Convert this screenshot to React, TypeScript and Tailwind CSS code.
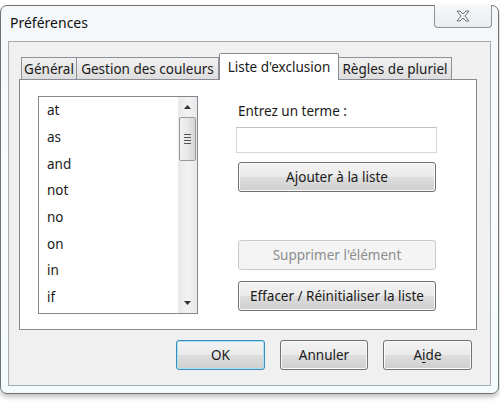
import React from "react";

const font = { fontFamily: '"Noto Sans", "Open Sans", Arial, sans-serif' };

function Tab({ label, selected, w }: { label: string; selected?: boolean; w: string }) {
  if (selected) {
    return (
      <div
        className={`${w} h-[27px] -mb-px relative z-10 flex items-center justify-center border border-[#898c95] border-b-0 bg-white text-[13.5px] text-[#1a1a1a] rounded-t-[2px]`}
      >
        {label}
      </div>
    );
  }
  return (
    <div
      className={`${w} h-[23px] -mb-px flex items-center justify-center border border-[#8e9196] border-b-0 bg-gradient-to-b from-[#f2f2f2] to-[#dcdcdc] text-[13.5px] text-[#1a1a1a] -ml-px first:ml-0`}
    >
      {label}
    </div>
  );
}

function Btn({
  children,
  w,
  disabled,
  focus,
}: {
  children: React.ReactNode;
  w: string;
  disabled?: boolean;
  focus?: boolean;
}) {
  if (disabled) {
    return (
      <div
        className={`${w} h-[30px] flex items-center justify-center rounded-[3px] border border-[#c9c9c9] bg-[#f4f4f4] text-[13.5px] text-[#8d8d8d]`}
      >
        {children}
      </div>
    );
  }
  return (
    <div
      className={`${w} h-[30px] flex items-center justify-center rounded-[3px] border ${
        focus ? "border-[#3c8bb8] shadow-[inset_0_0_0_1px_#a8e0f5]" : "border-[#707070] shadow-[inset_0_0_0_1px_#fbfbfb]"
      } bg-[linear-gradient(to_bottom,#f3f3f3_0%,#ebebeb_48%,#dddddd_52%,#cfcfcf_100%)] text-[13.5px] text-[#1a1a1a]`}
    >
      {children}
    </div>
  );
}

export default function App() {
  const items = ["at", "as", "and", "not", "no", "on", "in", "if"];
  return (
    <div className="w-[500px] h-[410px] bg-white pt-[5px] overflow-hidden" style={font}>
      <div className="w-[499px] h-[389px] rounded-[7px] border border-[#6e7175] bg-gradient-to-b from-[#f4f8fa] via-[#fbfdfe] to-[#f3fbfc] shadow-[0_3px_5px_rgba(0,0,0,0.25)] flex flex-col">
        {/* Title bar */}
        <div className="h-[35px] flex items-start relative">
          <div className="pl-[9px] pt-[6px] text-[14px] text-[#111]">Préférences</div>
          <div className="ml-auto mr-[6px] w-[58px] h-[23px] -mt-px rounded-b-[4px] border border-t-0 border-[#8f9396] bg-gradient-to-b from-[#f6f8f9] to-[#e9eef1] flex items-center justify-center">
            <svg width="16" height="12" viewBox="0 0 16 12">
              <path
                d="M2 1 L5 1 L8 4 L11 1 L14 1 L10 6 L14 11 L11 11 L8 8 L5 11 L2 11 L6 6 Z"
                fill="#f4f6f7"
                stroke="#6c7074"
                strokeWidth="1"
                strokeLinejoin="round"
              />
            </svg>
          </div>
        </div>
        {/* Client area */}
        <div className="flex-1 mx-[7px] mb-[7px] border border-[#a6abb0] bg-[#f0f0f0] flex flex-col pl-[10px] pr-[13px] pt-[10px]">
          {/* tabs */}
          <div className="flex items-end h-[27px] pl-[2px]">
            <Tab label="Général" w="w-[56px]" />
            <Tab label="Gestion des couleurs" w="w-[143px]" />
            <Tab label="Liste d'exclusion" w="w-[120px]" selected />
            <Tab label="Règles de pluriel" w="w-[114px]" />
          </div>
          <div className="h-[251px] border border-[#898c95] bg-white flex pl-[18px] pt-[16px]">
            {/* listbox */}
            <div className="w-[160px] h-[218px] border border-[#828790] flex">
              <div className="flex-1 flex flex-col pl-[8px] text-[13.5px] text-[#1a1a1a]">
                {items.map((it) => (
                  <div key={it} className="h-[26.7px] flex items-center">
                    {it}
                  </div>
                ))}
              </div>
              <div className="w-[19px] bg-gradient-to-r from-[#e9e9e9] via-[#f2f2f2] to-[#eaeaea] flex flex-col items-center">
                <div className="h-[20px] flex items-center justify-center">
                  <svg width="7" height="4" viewBox="0 0 7 4">
                    <path d="M0 4 L3.5 0 L7 4 Z" fill="#333" />
                  </svg>
                </div>
                <div className="w-[17px] h-[44px] rounded-[2px] border border-[#9a9a9a] bg-gradient-to-r from-[#f2f2f2] via-[#e8e8e8] to-[#d6d6d6] flex flex-col items-center justify-center gap-[2px]">
                  <div className="w-[7px] h-px bg-[#555]" />
                  <div className="w-[7px] h-px bg-[#555]" />
                  <div className="w-[7px] h-px bg-[#555]" />
                  <div className="w-[7px] h-px bg-[#555]" />
                </div>
                <div className="flex-1" />
                <div className="h-[20px] flex items-center justify-center">
                  <svg width="7" height="4" viewBox="0 0 7 4">
                    <path d="M0 0 L3.5 4 L7 0 Z" fill="#333" />
                  </svg>
                </div>
              </div>
            </div>
            {/* right column */}
            <div className="ml-[38px] w-[201px] flex flex-col pt-[5px]">
              <div className="pl-[2px] text-[13.5px] text-[#1a1a1a] leading-[20px]">Entrez un terme :</div>
              <div className="mt-[6px] h-[26px] border border-[#d7d7d7] border-t-[#c2c2c2] bg-white" />
              <div className="mt-[9px] pl-[2px]">
                <Btn w="w-[198px]">Ajouter à la liste</Btn>
              </div>
              <div className="mt-[48px] pl-[2px]">
                <Btn w="w-[198px]" disabled>
                  Supprimer l'élément
                </Btn>
              </div>
              <div className="mt-[11px] pl-[2px]">
                <Btn w="w-[198px]">Effacer / Réinitialiser la liste</Btn>
              </div>
            </div>
          </div>
          {/* bottom buttons */}
          <div className="flex justify-end gap-[15px] mt-[10px] pr-[5px]">
            <Btn w="w-[89px]" focus>
              OK
            </Btn>
            <Btn w="w-[88px]">Annuler</Btn>
            <Btn w="w-[89px]">
              <span>
                A<span className="underline underline-offset-2">i</span>de
              </span>
            </Btn>
          </div>
        </div>
      </div>
    </div>
  );
}
